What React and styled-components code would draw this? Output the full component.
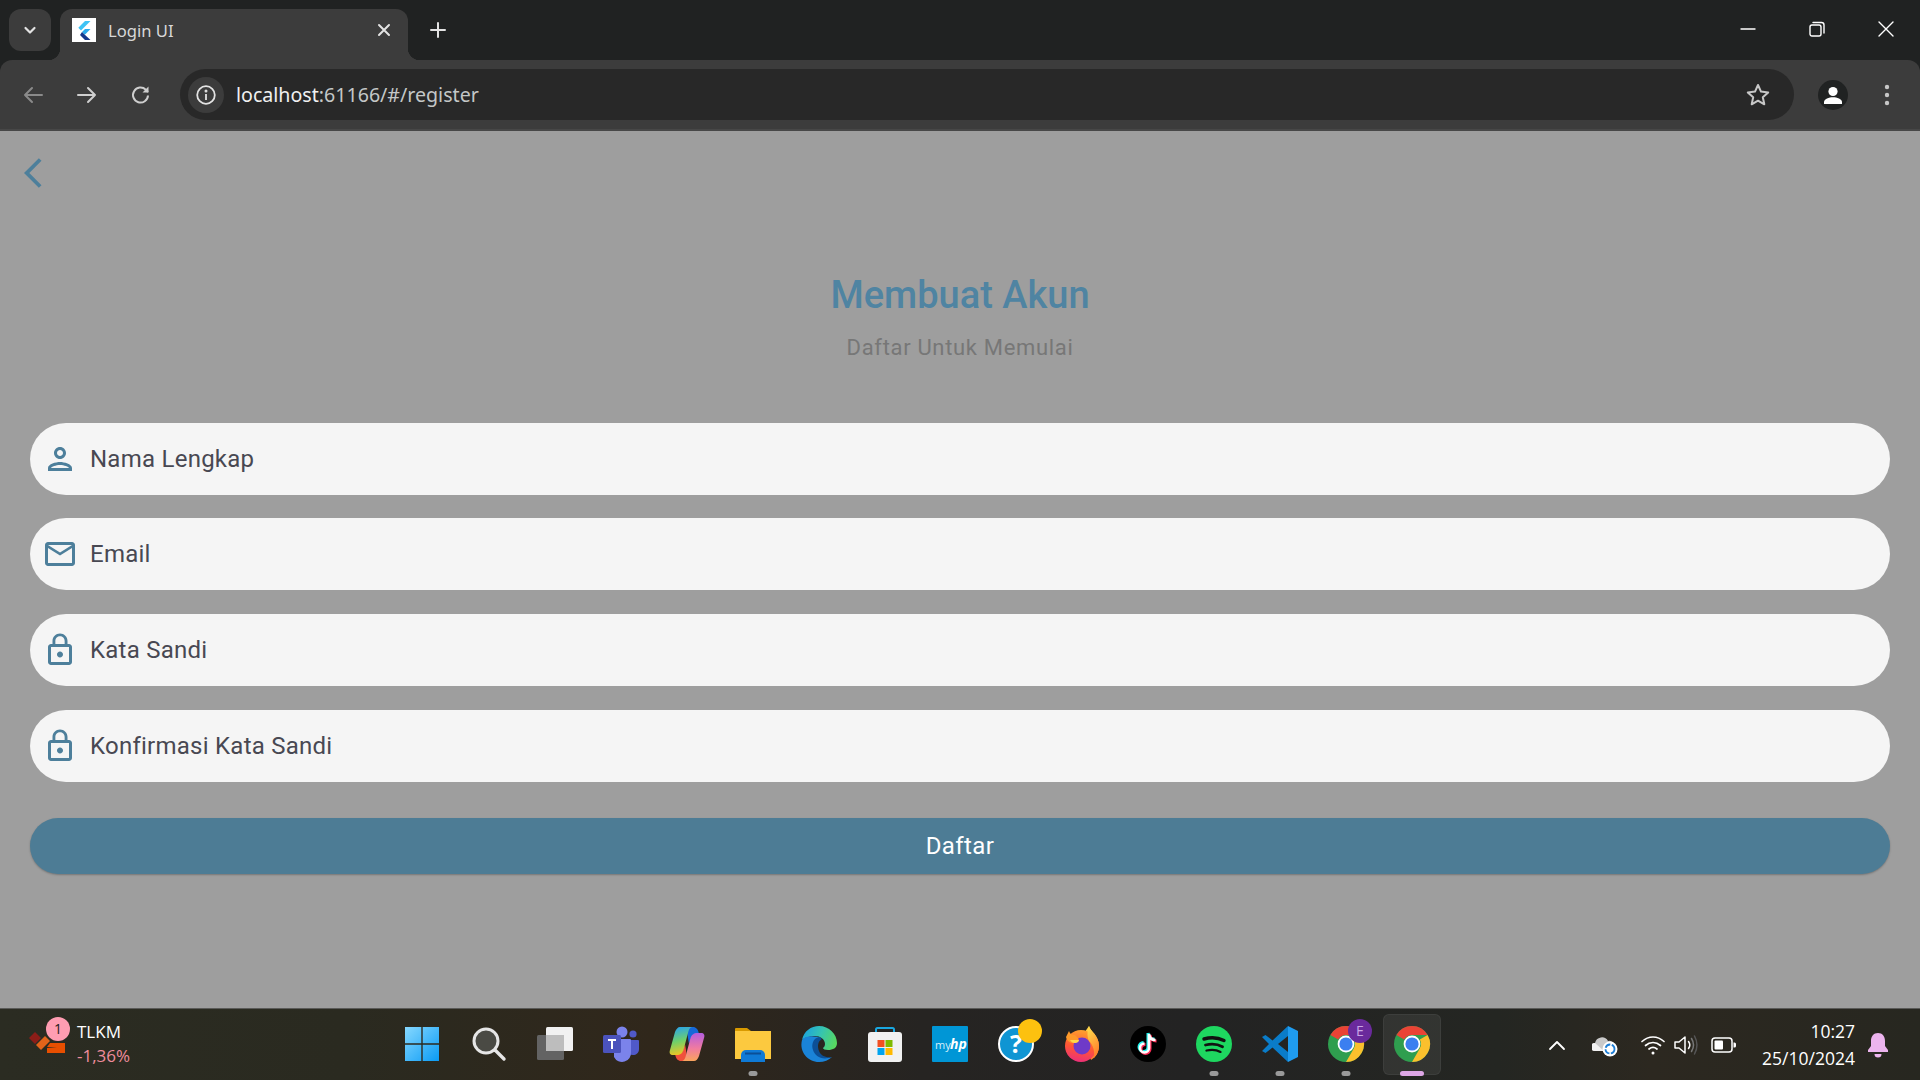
import React from "react";
import styled, { createGlobalStyle } from "styled-components";

const GlobalStyle = createGlobalStyle`
  html, body { margin: 0; padding: 0; height: 100%; overflow: hidden; }
  #root { height: 100%; }
`;

const Screen = styled.div`
  width: 1920px;
  height: 1080px;
  display: flex;
  flex-direction: column;
  background: #202222;
  overflow: hidden;
`;

/* ---------- browser chrome ---------- */
const TabStrip = styled.div`
  height: 60px;
  flex: none;
  display: flex;
  align-items: flex-start;
  padding: 9px 0 0 9px;
  box-sizing: border-box;
  color: #fff;
  font-family: "Noto Sans", "Open Sans", sans-serif;
`;

const TabSearch = styled.div`
  width: 42px;
  height: 42px;
  border-radius: 12px;
  background: #3c3c3c;
  display: flex;
  align-items: center;
  justify-content: center;
`;

const Tab = styled.div`
  position: relative;
  width: 348px;
  height: 51px;
  margin-left: 9px;
  background: #3c3c3c;
  border-radius: 12px 12px 0 0;
  display: flex;
  align-items: center;
  padding: 0 15px 9px 12px;
  box-sizing: border-box;
  &::before, &::after {
    content: "";
    position: absolute;
    bottom: 0;
    width: 12px;
    height: 12px;
    background: radial-gradient(circle at 0 0, #202222 12px, #3c3c3c 12.5px);
  }
  &::before { left: -12px; }
  &::after { right: -12px; background: radial-gradient(circle at 100% 0, #202222 12px, #3c3c3c 12.5px); }
`;

const Favicon = styled.div`
  width: 24px;
  height: 24px;
  background: #fff;
  flex: none;
`;

const TabTitle = styled.span`
  flex: 1;
  margin-left: 12px;
  font-size: 16.6px;
  color: #d8d8d8;
`;

const NewTab = styled.div`
  width: 42px;
  height: 42px;
  margin-left: 9px;
  display: flex;
  align-items: center;
  justify-content: center;
`;

const WindowControls = styled.div`
  margin-left: auto;
  display: flex;
  margin-top: -9px;
`;

const WindowButton = styled.div`
  width: 69px;
  height: 58px;
  display: flex;
  align-items: center;
  justify-content: center;
`;

const Toolbar = styled.div`
  height: 71px;
  flex: none;
  background: #3c3c3c;
  border-radius: 12px 12px 0 0;
  border-bottom: 2px solid #474747;
  box-sizing: border-box;
  display: flex;
  align-items: center;
`;

const NavButton = styled.div`
  width: ${(p) => p.$w || 54}px;
  height: 42px;
  flex: none;
  display: flex;
  align-items: center;
  justify-content: center;
  margin-left: ${(p) => p.$ml || 0}px;
`;

const AddressBar = styled.div`
  flex: none;
  width: 1614px;
  height: 51px;
  margin-left: 12px;
  background: #282828;
  border-radius: 26px;
  display: flex;
  align-items: center;
  padding: 0 0 0 8px;
  box-sizing: border-box;
  font-family: "Noto Sans", "Open Sans", sans-serif;
`;

const InfoChip = styled.div`
  width: 36px;
  height: 36px;
  border-radius: 50%;
  background: #3c3c3c;
  display: flex;
  align-items: center;
  justify-content: center;
  flex: none;
`;

const Url = styled.div`
  margin-left: 12px;
  font-size: 19.6px;
  color: #c4c7c7;
  flex: 1;
  b { font-weight: 400; color: #f0f0f0; }
`;

const Avatar = styled.div`
  width: 30px;
  height: 30px;
  border-radius: 50%;
  background: #202222;
  display: flex;
  align-items: center;
  justify-content: center;
`;

/* ---------- page ---------- */
const Page = styled.main`
  flex: 1;
  background: #9e9e9e;
  padding: 24px 30px 0 30px;
  box-sizing: border-box;
  font-family: Roboto, sans-serif;
  display: flex;
  flex-direction: column;
`;

const BackButton = styled.div`
  width: 36px;
  height: 36px;
  margin-left: -6px;
  color: #4d7f9b;
`;

const Heading = styled.div`
  margin-top: 83px;
  text-align: center;
`;

const Title = styled.h1`
  margin: 0;
  font-size: 38px;
  line-height: 42px;
  font-weight: 500;
  color: #4f84a2;
`;

const Subtitle = styled.p`
  margin: 18px 0 0;
  font-size: 22px;
  line-height: 28px;
  letter-spacing: 0.67px;
  color: #777;
`;

const Form = styled.div`
  margin-top: 60.6px;
  display: flex;
  flex-direction: column;
  gap: 23.67px;
`;

const Field = styled.div`
  height: 72px;
  flex: none;
  background: #f5f5f5;
  border-radius: 36px;
  display: flex;
  align-items: center;
  padding-left: 12px;
  gap: 12px;
  color: #4d7f9b;
`;

const FieldLabel = styled.span`
  font-size: 24px;
  letter-spacing: 0.25px;
  color: #484852;
`;

const SubmitButton = styled.div`
  margin-top: 36px;
  height: 56px;
  background: #4d7c95;
  border-radius: 28px;
  box-shadow: 0 1px 2px rgba(0, 0, 0, 0.25);
  color: #fff;
  font-size: 24px;
  letter-spacing: 0.4px;
  display: flex;
  align-items: center;
  justify-content: center;
`;

/* ---------- taskbar ---------- */
const Taskbar = styled.footer`
  height: 72px;
  flex: none;
  border-top: 1px solid #5a5a58;
  box-sizing: border-box;
  background: linear-gradient(90deg, #2b2c22 0%, #2a2a20 18%, #30271b 34%, #262422 48%, #232323 62%, #242622 78%, #2c2820 86%, #272720 100%);
  display: grid;
  grid-template-columns: 389px 1056px 1fr;
  font-family: "Open Sans", "Noto Sans", sans-serif;
  color: #fff;
`;

const StockWidget = styled.div`
  display: flex;
  align-items: center;
  padding-left: 28px;
`;

const StockIcon = styled.div`
  position: relative;
  width: 38px;
  height: 38px;
  flex: none;
`;

const StockBadge = styled.span`
  position: absolute;
  left: 18px;
  top: -9px;
  width: 24px;
  height: 24px;
  border-radius: 50%;
  background: #ff9db2;
  color: #1c1c1c;
  font-size: 14px;
  line-height: 24px;
  text-align: center;
`;

const StockText = styled.div`
  margin-left: 11px;
  font-size: 17px;
  line-height: 24px;
  margin-top: -1px;
`;

const StockChange = styled.div`
  color: #f08c9c;
`;

const AppRow = styled.div`
  display: flex;
  padding-left: 1px;
`;

const AppSlot = styled.div`
  position: relative;
  width: 66px;
  height: 71px;
  padding-bottom: 2px;
  box-sizing: border-box;
  display: flex;
  align-items: center;
  justify-content: center;
  &::before {
    content: "";
    display: ${(p) => (p.$active ? "block" : "none")};
    position: absolute;
    left: 4px;
    right: 4px;
    top: 5px;
    bottom: 5px;
    border-radius: 6px;
    background: rgba(255, 255, 255, 0.07);
    border: 1px solid rgba(255, 255, 255, 0.05);
  }
  svg { position: relative; overflow: visible; }
`;

const AppDot = styled.span`
  position: absolute;
  bottom: 4px;
  left: 50%;
  transform: translateX(-50%);
  width: ${(p) => (p.$active ? 24 : 9)}px;
  height: 5px;
  border-radius: 3px;
  background: ${(p) => (p.$active ? "#dda6e6" : "#9a9a9a")};
`;

const Tray = styled.div`
  display: flex;
  align-items: center;
  justify-content: flex-start;
  padding-left: 97px;
`;

const TrayItem = styled.div`
  width: 30px;
  height: 30px;
  margin-left: ${(p) => p.$gap || 0}px;
  flex: none;
  display: flex;
  align-items: center;
  justify-content: center;
`;

const Clock = styled.div`
  width: 92px;
  margin-left: 24px;
  text-align: right;
  font-size: 17.5px;
  line-height: 27px;
  white-space: nowrap;
  display: flex;
  flex-direction: column;
  align-items: flex-end;
`;

/* ---------- drawings ---------- */
const Icon = ({ d, size = 36, fill = "currentColor" }) => (
  <svg width={size} height={size} viewBox="0 0 24 24" fill={fill}>
    <path d={d} />
  </svg>
);

const PERSON = "M12 6c1.1 0 2 .9 2 2s-.9 2-2 2-2-.9-2-2 .9-2 2-2m0 10c2.7 0 5.8 1.29 6 2H6c.23-.72 3.31-2 6-2m0-12C9.79 4 8 5.79 8 8s1.79 4 4 4 4-1.79 4-4-1.79-4-4-4zm0 10c-2.67 0-8 1.34-8 4v2h16v-2c0-2.66-5.33-4-8-4z";
const MAIL = "M20 4H4c-1.1 0-1.99.9-1.99 2L2 18c0 1.1.9 2 2 2h16c1.1 0 2-.9 2-2V6c0-1.1-.9-2-2-2zm0 14H4V8l8 5 8-5v10zm-8-7L4 6h16l-8 5z";
const LOCK = "M12 17c1.1 0 2-.9 2-2s-.9-2-2-2-2 .9-2 2 .9 2 2 2zm6-9h-1V6c0-2.76-2.24-5-5-5S7 3.24 7 6v2H6c-1.1 0-2 .9-2 2v10c0 1.1.9 2 2 2h12c1.1 0 2-.9 2-2V10c0-1.1-.9-2-2-2zM8.9 6c0-1.71 1.39-3.1 3.1-3.1s3.1 1.39 3.1 3.1v2H8.9V6zM18 20H6V10h12v10z";

const Line = ({ w = 24, h = 24, vb, color = "#e3e3e3", sw = 2, children }) => (
  <svg width={w} height={h} viewBox={vb || `0 0 ${w} ${h}`} fill="none" stroke={color} strokeWidth={sw} strokeLinecap="round" strokeLinejoin="round">
    {children}
  </svg>
);

const ChromeLogo = () => (
  <>
    <circle cx="18" cy="18" r="18" fill="#2f9e4f" />
    <path d="M33.6 9H18a9 9 0 0 0-7.8 4.5L2.4 9a18 18 0 0 1 31.2 0z" fill="#ea4335" />
    <path d="M33.6 9A18 18 0 0 1 18 36l7.8-13.5a9 9 0 0 0 0-9z" fill="#fbc02d" />
    <circle cx="18" cy="18" r="8.4" fill="#fff" />
    <circle cx="18" cy="18" r="6.6" fill="#3b7ff0" />
  </>
);

const apps = [
  { key: "start", node: (
    <svg width="36" height="36" viewBox="0 0 36 36">
      <defs>
        <linearGradient id="win" x1="0" y1="0" x2="1" y2="1">
          <stop offset="0" stopColor="#86d8ff" />
          <stop offset="1" stopColor="#0a9bf5" />
        </linearGradient>
      </defs>
      <path d="M0 1h16.300v16.300H0zM17.700 1H34v16.300H17.700zM0 18.700h16.300V35H0zM17.700 18.700H34V35H17.700z" fill="url(#win)" />
    </svg>
  ) },
  { key: "search", node: (
    <svg width="36" height="36" viewBox="0 0 36 36" fill="none">
      <circle cx="15" cy="15" r="12" fill="#4a4a44" stroke="#e6e6e6" strokeWidth="3" />
      <path d="M24 24l9 9" stroke="#e6e6e6" strokeWidth="3.400" strokeLinecap="round" />
    </svg>
  ) },
  { key: "tasks", node: (
    <svg width="36" height="36" viewBox="0 0 36 36">
      <rect x="0" y="9" width="27" height="25" rx="1.500" fill="#636363" />
      <rect x="9" y="1" width="27" height="24" rx="1.500" fill="#f1f1f1" />
      <rect x="9" y="9" width="18" height="16" fill="#bdbdbd" />
    </svg>
  ) },
  { key: "teams", node: (
    <svg width="36" height="36" viewBox="0 0 36 36">
      <circle cx="30" cy="8" r="3.600" fill="#5059c9" />
      <path d="M24 14h11a1 1 0 0 1 1 1v8c0 4-3 6-6 6s-5-2-6-5z" fill="#5059c9" />
      <circle cx="19" cy="6" r="5.500" fill="#7b83eb" />
      <path d="M11 13h16a1 1 0 0 1 1 1v12a9 9 0 0 1-17 5z" fill="#7b83eb" />
      <rect x="0" y="9" width="18" height="18" rx="1.500" fill="#4b53bc" />
      <path d="M5 13h8v2h-3v8H8v-8H5z" fill="#fff" />
    </svg>
  ) },
  { key: "copilot", node: (
    <svg width="36" height="36" viewBox="0 0 36 36">
      <defs>
        <linearGradient id="cpA" x1="0.300" y1="0" x2="0.500" y2="1">
          <stop offset="0" stopColor="#2aa4ea" />
          <stop offset="0.500" stopColor="#6fd06a" />
          <stop offset="1" stopColor="#f5c61f" />
        </linearGradient>
        <linearGradient id="cpB" x1="0.500" y1="0" x2="0.500" y2="1">
          <stop offset="0" stopColor="#b45de0" />
          <stop offset="0.550" stopColor="#f07ba0" />
          <stop offset="1" stopColor="#f9a45c" />
        </linearGradient>
      </defs>
      <path d="M17 1h7c3 0 5 2 6 7h-3c-3 0-4 2-5 4l-2 6-1-6c-.5-3-.5-8-2-11z" fill="#1668d8" />
      <path d="M19 35h-7c-3 0-5-2-6-7h3c3 0 4-2 5-4l2-6 1 6c.5 3 .5 8 2 11z" fill="#f0503c" />
      <path d="M11 1h13c-3 0-4 2-5 6l-4.500 17c-1 3-3 5-7 5H4c-3 0-4-2-3-5L6 6c1-3 3-5 5-5z" fill="url(#cpA)" />
      <path d="M25 35H12c3 0 4-2 5-6l4.500-17c1-3 3-5 7-5H32c3 0 4 2 3 5l-5 18c-1 3-3 5-5 5z" fill="url(#cpB)" />
    </svg>
  ) },
  { key: "files", dot: true, node: (
    <svg width="36" height="36" viewBox="0 0 36 36">
      <path d="M0 3a1 1 0 0 1 1-1h11l4 3h20v6H0z" fill="#d99a00" />
      <path d="M0 5h36v28H0z" fill="#fcc93f" />
      <path d="M6 36v-7a5 5 0 0 1 5-5h14a5 5 0 0 1 5 5v7z" fill="#0f7ad6" />
      <rect x="10" y="26.500" width="16" height="2" fill="#0b4f96" />
    </svg>
  ) },
  { key: "edge", node: (
    <svg width="36" height="36" viewBox="0 0 36 36">
      <defs>
        <linearGradient id="edgeA" x1="0" y1="0.300" x2="1" y2="0.600">
          <stop offset="0" stopColor="#1ba2e0" />
          <stop offset="0.500" stopColor="#36c4b0" />
          <stop offset="1" stopColor="#58d85f" />
        </linearGradient>
      </defs>
      <path d="M1 14C3 5 10 0 18 0c10 0 18 8 18 17 0 5-4 7-9 7-3 0-5-1-5-2 1-1 2-2 2-4 0-5-5-8-10-8C9 10 3 12 1 14z" fill="url(#edgeA)" />
      <path d="M1 14c-3 12 6 22 17 22 5 0 10-2 13-5-4 2-10 1-13-3-3-4-3-9-1-12 1-2 2-3 3-4C14 10 5 9 1 14z" fill="#1a83d8" />
      <path d="M18 11c-6 1-8 8-6 13 2 6 9 11 19 7-6 1-11-1-13-6-2-5-1-10 3-12z" fill="#0c4f96" />
    </svg>
  ) },
  { key: "store", node: (
    <svg width="36" height="36" viewBox="0 0 36 36">
      <path d="M9 9V3.500A1.500 1.500 0 0 1 10.500 2h15A1.500 1.500 0 0 1 27 3.500V9" fill="none" stroke="#19a7e0" strokeWidth="2" />
      <rect x="1" y="6" width="34" height="30" rx="3" fill="#f1f1f1" />
      <rect x="10.500" y="14" width="7" height="7" fill="#f25022" />
      <rect x="18.500" y="14" width="7" height="7" fill="#7fba00" />
      <rect x="10.500" y="22" width="7" height="7" fill="#00a4ef" />
      <rect x="18.500" y="22" width="7" height="7" fill="#ffb900" />
    </svg>
  ) },
  { key: "myhp", node: (
    <svg width="36" height="36" viewBox="0 0 36 36">
      <rect width="36" height="36" rx="1" fill="#0096d6" />
      <text x="3" y="23" fontSize="11" fill="#d7effa" fontFamily="Open Sans, sans-serif">my</text>
      <text x="18" y="23" fontSize="14" fontStyle="italic" fontWeight="700" fill="#fff" fontFamily="Open Sans, sans-serif">hp</text>
    </svg>
  ) },
  { key: "help", node: (
    <svg width="36" height="36" viewBox="0 0 36 36">
      <circle cx="18" cy="18" r="17" fill="#0f95d3" stroke="#fff" strokeWidth="2" />
      <text x="18" y="27" textAnchor="middle" fontSize="25" fontWeight="700" fill="#fff" fontFamily="Open Sans, sans-serif">?</text>
      <circle cx="32" cy="5" r="12" fill="#fdc10f" />
    </svg>
  ) },
  { key: "firefox", node: (
    <svg width="36" height="36" viewBox="0 0 36 36">
      <defs>
        <linearGradient id="ffA" x1="0.600" y1="0" x2="0.400" y2="1">
          <stop offset="0" stopColor="#ffa32e" />
          <stop offset="0.550" stopColor="#ff5634" />
          <stop offset="1" stopColor="#ec2f7a" />
        </linearGradient>
        <linearGradient id="ffB" x1="0.300" y1="0" x2="0.700" y2="1">
          <stop offset="0" stopColor="#ffd84a" />
          <stop offset="1" stopColor="#ff7a2a" />
        </linearGradient>
      </defs>
      <path d="M25 0c1 5 10 9 10 20 0 6-3 11-8 14L18 10z" fill="url(#ffB)" />
      <circle cx="17" cy="20" r="16" fill="url(#ffA)" />
      <path d="M25 0c1 5 10 9 10 20 0 5-2 9-5 12 1-7-1-13-5-17-2-4-2-10 0-15z" fill="url(#ffB)" />
      <circle cx="18" cy="20" r="8.500" fill="#6e3ac8" />
      <path d="M2 11l3-6c1 3 3 4 6 4l3 3c2 2-1 5-4 5-4 0-7-2-8-6z" fill="#ff9a2a" />
      <path d="M6 14h9c0 2-2 3-4 3-2 0-4-1-5-3z" fill="#ffd84a" />
    </svg>
  ) },
  { key: "tiktok", node: (
    <svg width="36" height="36" viewBox="0 0 36 36" fill="none">
      <circle cx="18" cy="18" r="18" fill="#000" />
      <path d="M19 8v14a4.500 4.500 0 1 1-4.500-4.500M19 8c.5 3.500 3 6 6.500 6" stroke="#25f4ee" strokeWidth="3" transform="translate(-1 -1)" />
      <path d="M19 8v14a4.500 4.500 0 1 1-4.500-4.500M19 8c.5 3.500 3 6 6.500 6" stroke="#fe2c55" strokeWidth="3" transform="translate(1 1)" />
      <path d="M19 8v14a4.500 4.500 0 1 1-4.500-4.500M19 8c.5 3.500 3 6 6.500 6" stroke="#fff" strokeWidth="2.600" />
    </svg>
  ) },
  { key: "spotify", dot: true, node: (
    <svg width="36" height="36" viewBox="0 0 36 36" fill="none" stroke="#111" strokeLinecap="round">
      <circle cx="18" cy="18" r="18" fill="#1ed760" stroke="none" />
      <path d="M8 13c7-2 14-1.500 20 1.500" strokeWidth="3.400" />
      <path d="M9.500 19c6-1.500 12-1 17 1.800" strokeWidth="2.800" />
      <path d="M10.500 24.500c5-1.200 10-.8 14 1.400" strokeWidth="2.300" />
    </svg>
  ) },
  { key: "vscode", dot: true, node: (
    <svg width="36" height="36" viewBox="0 0 36 36">
      <path d="M26 0l10 5v26l-10 5z" fill="#1f9cf0" />
      <path d="M26 0L10.500 14.500 3.500 9 0 11l7 7-7 7 3.500 2 7-5.500L26 36V26l-10-8 10-8z" fill="#0a7cc9" />
    </svg>
  ) },
  { key: "chrome-profile", dot: true, node: (
    <svg width="36" height="36" viewBox="0 0 36 36">
      <ChromeLogo />
      <circle cx="32" cy="5" r="12" fill="#6a2a9c" />
      <text x="32" y="10" textAnchor="middle" fontSize="14" fill="#c9a6e6" fontFamily="Open Sans, sans-serif">E</text>
    </svg>
  ) },
  { key: "chrome", active: true, node: (
    <svg width="36" height="36" viewBox="0 0 36 36">
      <ChromeLogo />
    </svg>
  ) },
];

function BrowserFrame() {
  return (
    <>
      <TabStrip>
        <TabSearch>
          <Line w={18} h={18} sw={2.2}><path d="M4.500 7l4.500 4.500L13.500 7" /></Line>
        </TabSearch>
        <Tab>
          <Favicon>
            <svg width="24" height="24" viewBox="0 0 24 24">
              <path d="M13 3h5.500L9 12.500l-2.700-2.700z" fill="#3ec3f5" />
              <path d="M13 11h5.500L12.800 16.800 10 14z" fill="#29a9ec" />
              <path d="M10 14l2.800 2.800L18.500 22H13L8 17z" fill="#14378c" />
            </svg>
          </Favicon>
          <TabTitle>Login UI</TabTitle>
          <Line w={18} h={18} sw={2}><path d="M4 4l10 10M14 4L4 14" /></Line>
        </Tab>
        <NewTab>
          <Line w={20} h={20} sw={2}><path d="M10 3v14M3 10h14" /></Line>
        </NewTab>
        <WindowControls>
          <WindowButton>
            <Line w={16} h={16} color="#fff" sw={1.400}><path d="M1 8h14" /></Line>
          </WindowButton>
          <WindowButton>
            <Line w={16} h={16} color="#fff" sw={1.400}>
              <rect x="1" y="4" width="11" height="11" rx="2" />
              <path d="M4 1.500h8.500a2.500 2.500 0 0 1 2.500 2.500v8" />
            </Line>
          </WindowButton>
          <WindowButton>
            <Line w={16} h={16} color="#fff" sw={1.400}><path d="M1 1l14 14M15 1L1 15" /></Line>
          </WindowButton>
        </WindowControls>
      </TabStrip>
      <Toolbar>
        <NavButton $ml={6}>
          <Line w={22} h={22} color="#8a8a8a" sw={2}><path d="M20 11H3M10 4l-7 7 7 7" /></Line>
        </NavButton>
        <NavButton>
          <Line w={22} h={22} color="#cfcfcf" sw={2}><path d="M2 11h17M12 4l7 7-7 7" /></Line>
        </NavButton>
        <NavButton>
          <Line w={22} h={22} color="#cfcfcf" sw={2}>
            <path d="M18 11.500a7.500 7.500 0 1 1-2.200-5.800L18 8" strokeLinecap="butt" />
            <path d="M18.500 2.500v6h-6" fill="#cfcfcf" stroke="none" />
          </Line>
        </NavButton>
        <AddressBar>
          <InfoChip>
            <svg width="22" height="22" viewBox="0 0 22 22" fill="none" stroke="#e3e3e3" strokeWidth="1.800">
              <circle cx="11" cy="11" r="8.800" />
              <path d="M11 10v6" />
              <circle cx="11" cy="7" r="0.600" fill="#e3e3e3" />
            </svg>
          </InfoChip>
          <Url><b>localhost</b>:61166/#/register</Url>
          <Line w={26} h={26} color="#c7c7c7" sw={2}>
            <path d="M13 3l3 6.600 7.200.8-5.400 4.800 1.500 7.100L13 18.700l-6.300 3.600 1.500-7.100L2.800 10.400 10 9.600z" />
          </Line>
          <span style={{ width: 23 }} />
        </AddressBar>
        <NavButton $ml={12}>
          <Avatar>
            <svg width="22" height="22" viewBox="0 0 22 22" fill="#fff">
              <circle cx="11" cy="7.500" r="4.600" />
              <path d="M2 20v-2c0-3 5-4.800 9-4.800s9 1.800 9 4.800v2z" />
            </svg>
          </Avatar>
        </NavButton>
        <NavButton $w={54}>
          <svg width="6" height="24" viewBox="0 0 6 24" fill="#c7c7c7">
            <circle cx="3" cy="4" r="2.200" />
            <circle cx="3" cy="12" r="2.200" />
            <circle cx="3" cy="20" r="2.200" />
          </svg>
        </NavButton>
      </Toolbar>
    </>
  );
}

function WindowsTaskbar() {
  return (
    <Taskbar>
      <StockWidget>
        <StockIcon>
          <svg width="38" height="38" viewBox="0 0 38 38">
            <path d="M1 12l6-6 6 6-6 6z" fill="#8c1d18" />
            <path d="M8 19l9-9 5 5-9 9z" fill="#e2641a" />
            <path d="M19 21l3-4h15v10H19v-5h10z" fill="#e84f00" />
          </svg>
          <StockBadge>1</StockBadge>
        </StockIcon>
        <StockText>
          TLKM
          <StockChange>-1,36%</StockChange>
        </StockText>
      </StockWidget>
      <AppRow>
        {apps.map((app) => (
          <AppSlot key={app.key} $active={app.active}>
            {app.node}
            {(app.dot || app.active) && <AppDot $active={app.active} />}
          </AppSlot>
        ))}
      </AppRow>
      <Tray>
        <TrayItem>
          <Line w={20} h={20} color="#fff" sw={1.800}><path d="M3 14l7-7 7 7" /></Line>
        </TrayItem>
        <TrayItem $gap={18}>
          <svg width="26" height="24" viewBox="0 0 26 24">
            <path d="M3 18a4 4 0 0 1 0-8 7 7 0 0 1 13-2 5 5 0 0 1 3 10z" fill="#c9c9c9" />
            <path d="M3 18a4 4 0 0 1 0-8l9 8z" fill="#f2f2f2" />
            <circle cx="18" cy="16" r="7.500" fill="#fff" />
            <circle cx="18" cy="16" r="4.500" fill="none" stroke="#1e7fd6" strokeWidth="1.800" strokeDasharray="6 1.500" />
          </svg>
        </TrayItem>
        <TrayItem $gap={18}>
          <svg width="26" height="22" viewBox="0 0 26 22" fill="none" stroke="#fff" strokeWidth="1.700" strokeLinecap="round">
            <path d="M2 7.500c6.500-6 15.500-6 22 0" />
            <path d="M5.500 11.500c4.500-4 10.500-4 15 0" />
            <path d="M9 15c2.500-2 5.500-2 8 0" />
            <circle cx="13" cy="19" r="1.500" fill="#fff" stroke="none" />
          </svg>
        </TrayItem>
        <TrayItem $gap={3}>
          <svg width="26" height="24" viewBox="0 0 26 24" fill="none" stroke="#fff" strokeWidth="1.500" strokeLinejoin="round" strokeLinecap="round">
            <path d="M2 9v6h4l6 5V4L6 9z" />
            <path d="M15.500 8.500c1.500 2 1.500 5 0 7" />
            <path d="M18.500 5.500c2.500 4 2.500 9 0 13" stroke="#777" />
            <path d="M21.500 3c3 5.500 3 12.500 0 18" stroke="#555" />
          </svg>
        </TrayItem>
        <TrayItem $gap={8}>
          <svg width="26" height="18" viewBox="0 0 26 18">
            <rect x="1" y="2" width="20" height="14" rx="3" fill="none" stroke="#fff" strokeWidth="1.500" />
            <rect x="3.500" y="4.500" width="8.500" height="9" rx="1" fill="#fff" />
            <path d="M22.500 6.500h1a1.500 1.500 0 0 1 1.500 1.500v2a1.500 1.500 0 0 1-1.500 1.500h-1z" fill="#fff" />
          </svg>
        </TrayItem>
        <Clock>
          <span>10:27</span>
          <span>25/10/2024</span>
        </Clock>
        <TrayItem $gap={8}>
          <svg width="24" height="26" viewBox="0 0 24 26" fill="#ecb4ee">
            <path d="M12 1c4.500 0 7 3.500 7 8v5l3 4v2H2v-2l3-4V9c0-4.500 2.500-8 7-8z" />
            <path d="M8.500 22h7a3.500 3.500 0 0 1-7 0z" />
          </svg>
        </TrayItem>
      </Tray>
    </Taskbar>
  );
}

function App() {
  const fields = [
    { label: "Nama Lengkap", icon: PERSON },
    { label: "Email", icon: MAIL },
    { label: "Kata Sandi", icon: LOCK },
    { label: "Konfirmasi Kata Sandi", icon: LOCK },
  ];

  return (
    <>
      <GlobalStyle />
      <Screen>
        <BrowserFrame />
        <Page>
          <BackButton>
            <svg width="36" height="36" viewBox="0 0 24 24" fill="currentColor">
              <path d="M11.670 3.870L9.900 2.100 0 12l9.900 9.900 1.770-1.770L3.540 12z" />
            </svg>
          </BackButton>
          <Heading>
            <Title>Membuat Akun</Title>
            <Subtitle>Daftar Untuk Memulai</Subtitle>
          </Heading>
          <Form>
            {fields.map((field) => (
              <Field key={field.label}>
                <Icon d={field.icon} />
                <FieldLabel>{field.label}</FieldLabel>
              </Field>
            ))}
          </Form>
          <SubmitButton>Daftar</SubmitButton>
        </Page>
        <WindowsTaskbar />
      </Screen>
    </>
  );
}

export default App;
